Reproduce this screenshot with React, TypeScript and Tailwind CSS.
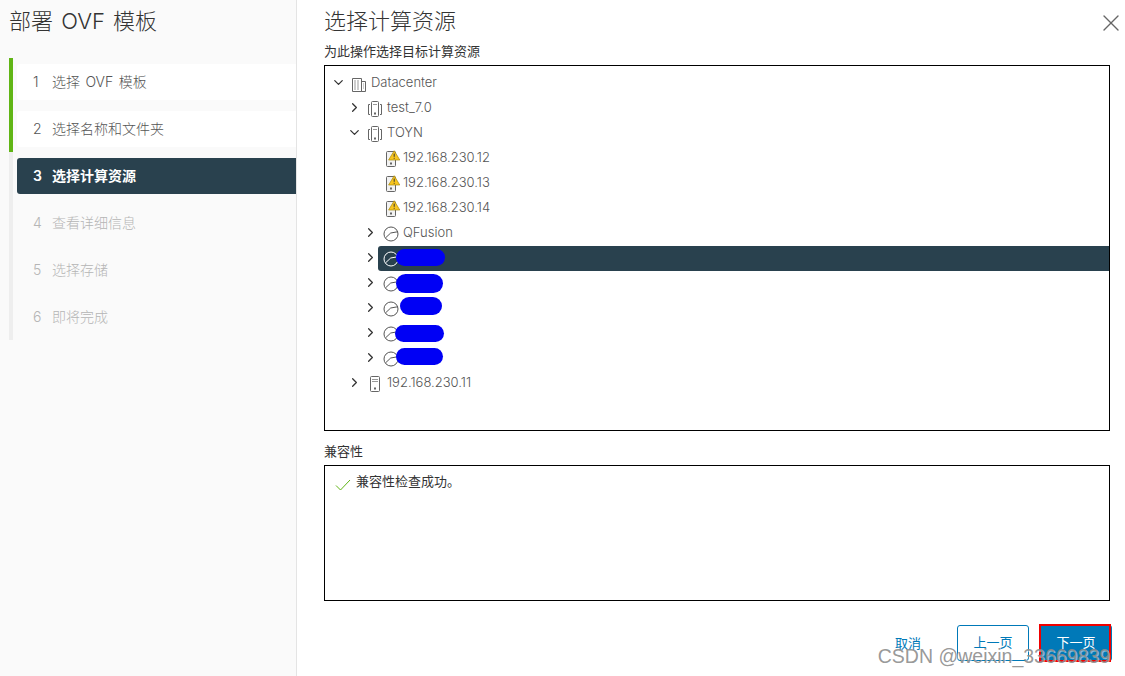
import { ChevronDown, ChevronRight, X } from "lucide-react"

const FONT = "font-['Inter','Noto_Sans_CJK_SC',sans-serif]"

const steps = [
  { n: 1, label: "选择 OVF 模板", state: "done" },
  { n: 2, label: "选择名称和文件夹", state: "done" },
  { n: 3, label: "选择计算资源", state: "active" },
  { n: 4, label: "查看详细信息", state: "todo" },
  { n: 5, label: "选择存储", state: "todo" },
  { n: 6, label: "即将完成", state: "todo" },
]

function DatacenterIcon() {
  return (
    <svg width="16" height="16" viewBox="0 0 16 16" fill="none" stroke="#666" strokeWidth="1">
      <path d="M1.5 15.5V2.5h9v13zM10.5 5.5h4v10h-4z" />
      <path d="M3 5h2M6 5h2M3 7h2M6 7h2M3 9h2M6 9h2M3 11h2M6 11h2M3 13h2M6 13h2M12 8h1M12 10h1M12 12h1" stroke="#999" />
    </svg>
  )
}

function ClusterIcon() {
  return (
    <svg width="16" height="16" viewBox="0 0 16 16" fill="none" stroke="#666" strokeWidth="1">
      <path d="M3 3.5H1.5v10H3M13 3.5h1.5v10H13" />
      <rect x="4.5" y="0.5" width="7" height="15" rx="1" />
      <path d="M6 3.5h4" stroke="#999" />
      <rect x="7" y="11.5" width="2" height="2" fill="#666" stroke="none" />
    </svg>
  )
}

function HostIcon() {
  return (
    <svg width="16" height="16" viewBox="0 0 16 16" fill="none" stroke="#666" strokeWidth="1">
      <rect x="3.5" y="0.5" width="9" height="15" rx="1" />
      <path d="M5 3.5h6M5 5.5h6" stroke="#999" />
      <rect x="7" y="11.5" width="2" height="2" fill="#666" stroke="none" />
    </svg>
  )
}

function WarnHostIcon() {
  return (
    <svg width="16" height="16" viewBox="0 0 16 16" fill="none" stroke="#666" strokeWidth="1" className="overflow-visible">
      <rect x="3.5" y="0.5" width="9" height="15" rx="1" fill="#f2f2f2" />
      <rect x="7" y="11.5" width="2" height="2" fill="#666" stroke="none" />
      <path d="M11.2 -0.3 16.8 9H5.6z" fill="#f8c51c" stroke="#a88a10" strokeWidth="0.7" />
      <path d="M11.2 2.6v3.2M11.2 6.8v1" stroke="#333" />
    </svg>
  )
}

function PoolIcon(props: { light?: boolean }) {
  return (
    <svg width="16" height="16" viewBox="0 0 16 16" fill="none" stroke={props.light ? "#fff" : "#555"} strokeWidth="1">
      <circle cx="8" cy="8" r="7" />
      <path d="M2.7 11.7 7.7 7 15 5.7" />
    </svg>
  )
}

function Row(props: {
  depth: 0 | 1 | 2
  open?: boolean
  leaf?: boolean
  selected?: boolean
  icon: React.ReactNode
  children?: React.ReactNode
}) {
  const indent = props.depth === 0 ? "pl-[5px]" : props.depth === 1 ? "pl-[21px]" : "pl-[37px]"
  return (
    <div className={`flex h-[25px] items-center ${indent}`}>
      <div className="mb-[2px] flex w-4 shrink-0 justify-center text-[#333]">
        {props.leaf ? null : props.open ? <ChevronDown size={15} /> : <ChevronRight size={15} />}
      </div>
      <div
        className={
          props.selected
            ? "flex h-full flex-1 items-center gap-1 rounded-l-[3px] bg-[#29414e] pl-[5px]"
            : "flex h-full flex-1 items-center gap-1 pl-[5px]"
        }
      >
        {props.icon}
        {props.children}
      </div>
    </div>
  )
}

function TreeText(props: { children: React.ReactNode }) {
  return <span className="mb-[2px] text-[13px] leading-none font-light text-[#555]">{props.children}</span>
}

export default function App() {
  return (
    <div className={`relative flex h-[676px] w-[1125px] overflow-hidden bg-white ${FONT}`}>
      <aside className="w-[297px] shrink-0 border-r border-[#e4e4e4] bg-[#fafafa] pl-[9px]">
        <h1 className="mt-[6px] h-[44px] text-[22px] leading-[30px] font-light text-[#333] [word-spacing:2px]">
          部署 OVF 模板
        </h1>
        <ol className="mt-[8px]">
          {steps.map((s) => (
            <li
              key={s.n}
              className={
                s.state === "done"
                  ? "h-[47px] border-l-4 border-[#60b515] pt-[6px] pl-1"
                  : "h-[47px] border-l-4 border-[#eeeeee] pt-[6px] pl-1"
              }
            >
              <div
                className={
                  s.state === "active"
                    ? "flex h-9 items-center rounded-l-[3px] bg-[#29414e] pb-[2px] pl-[15px] text-[14px] font-semibold text-white"
                    : s.state === "done"
                      ? "flex h-9 items-center rounded-l-[3px] bg-white pb-[2px] pl-[15px] text-[14px] font-light text-[#555]"
                      : "flex h-9 items-center pb-[2px] pl-[15px] text-[14px] font-light text-[#b5b5b5]"
                }
              >
                <span className="w-5 pl-px">{s.n}</span>
                <span className="[word-spacing:1.5px]">{s.label}</span>
              </div>
            </li>
          ))}
        </ol>
      </aside>

      <main className="flex flex-1 flex-col pr-[15px] pl-[27px]">
        <header className="flex h-[44px] items-start justify-between">
          <h2 className="mt-[6px] text-[22px] leading-[30px] font-light text-[#333]">选择计算资源</h2>
          <button className="mt-[9px] -mr-[15px] text-[#666]">
            <X size={28} strokeWidth={1.2} />
          </button>
        </header>
        <p className="h-[21px] text-[13px] leading-[15px] text-[#333]">为此操作选择目标计算资源</p>
        <div className="h-[366px] border border-black pt-[5px]">
          <Row depth={0} open icon={<DatacenterIcon />}>
            <TreeText>Datacenter</TreeText>
          </Row>
          <Row depth={1} icon={<ClusterIcon />}>
            <TreeText>test_7.0</TreeText>
          </Row>
          <Row depth={1} open icon={<ClusterIcon />}>
            <TreeText>TOYN</TreeText>
          </Row>
          <Row depth={1} leaf icon={<span className="ml-[16px]"><WarnHostIcon /></span>}>
            <TreeText>192.168.230.12</TreeText>
          </Row>
          <Row depth={1} leaf icon={<span className="ml-[16px]"><WarnHostIcon /></span>}>
            <TreeText>192.168.230.13</TreeText>
          </Row>
          <Row depth={1} leaf icon={<span className="ml-[16px]"><WarnHostIcon /></span>}>
            <TreeText>192.168.230.14</TreeText>
          </Row>
          <Row depth={2} icon={<PoolIcon />}>
            <TreeText>QFusion</TreeText>
          </Row>
          <Row depth={2} selected icon={<PoolIcon light />}>
            <div className="-ml-[7px] mb-[2px] h-[17px] w-[49px] rounded-full bg-[#0000f5]" />
          </Row>
          <Row depth={2} icon={<PoolIcon />}>
            <div className="-ml-[7px] h-[19px] w-[47px] rounded-full bg-[#0000f5]" />
          </Row>
          <Row depth={2} icon={<PoolIcon />}>
            <div className="-ml-[3px] mb-[5px] h-[18px] w-[42px] rounded-full bg-[#0000f5]" />
          </Row>
          <Row depth={2} icon={<PoolIcon />}>
            <div className="-ml-[8px] h-[17px] w-[49px] rounded-full bg-[#0000f5]" />
          </Row>
          <Row depth={2} icon={<PoolIcon />}>
            <div className="-ml-[7px] mb-[4px] h-[17px] w-[47px] rounded-full bg-[#0000f5]" />
          </Row>
          <Row depth={1} icon={<HostIcon />}>
            <TreeText>192.168.230.11</TreeText>
          </Row>
        </div>
        <p className="mt-[13px] h-[21px] text-[13px] leading-[15px] text-[#333]">兼容性</p>
        <div className="flex h-[136px] items-start gap-[5px] border border-black pt-[7px] pl-[10px]">
          <svg width="16" height="16" viewBox="0 0 16 16" fill="none" stroke="#60b515" strokeWidth="1" className="mt-[4px]">
            <path d="M1 8.5 5.5 13 15 3" />
          </svg>
          <span className="text-[13px] leading-[17px] text-[#333]">兼容性检查成功。</span>
        </div>
        <footer className="mt-[24px] flex items-center justify-end">
          <button className="mt-[1px] mr-[36px] text-[13px] text-[#0079b8]">取消</button>
          <button className="mr-[11px] h-[36px] w-[72px] rounded-[3px] border border-[#0079b8] text-[13px] text-[#0079b8]">
            上一页
          </button>
          <button className="relative -mr-[2px] h-[36px] w-[72px] rounded-[3px] bg-[#0079b8] text-[13px] text-white">
            下一页
            <span className="absolute -top-[1px] -left-[1px] h-[38px] w-[72px] border-2 border-[#f00000]" />
          </button>
        </footer>
      </main>

      <span className="absolute right-[15px] bottom-[8px] font-['Liberation_Sans',sans-serif] text-[19.5px] leading-[24px] text-[#8c8c8c]/90 [text-shadow:1px_1px_0_rgba(255,255,255,0.5)]">
        CSDN @weixin_33669839
      </span>
    </div>
  )
}
